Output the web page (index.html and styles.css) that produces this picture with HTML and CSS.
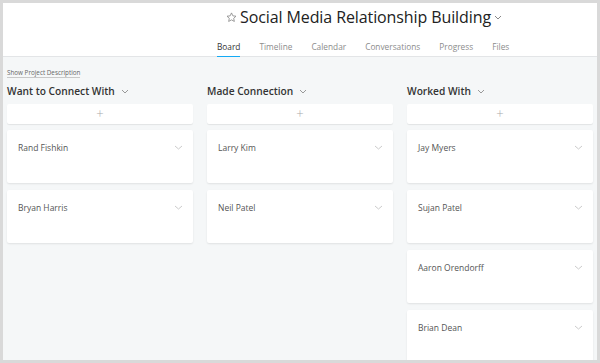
FILE: index.html
```html
<!DOCTYPE html>
<html>
<head>
  <title>Social Media Relationship Building</title>
  <link rel="stylesheet" href="styles.css">
</head>
<body>
  <div class="frame">
    <div class="header">
      <div class="title-row">
        <svg class="star" width="11" height="11" viewBox="0 0 12 12"><path d="M6 1l1.5 3.2 3.4.4-2.5 2.3.7 3.4L6 8.6 2.9 10.3l.7-3.4L1.1 4.6l3.4-.4z" fill="none" stroke="#888" stroke-width="0.9" stroke-linejoin="round"/></svg>
        <h1 class="title">Social Media Relationship Building</h1>
        <svg class="caret" width="8" height="5" viewBox="0 0 8 5"><path d="M1 1l3 3 3-3" fill="none" stroke="#888" stroke-width="1"/></svg>
      </div>
      <div class="tabs">
        <span class="tab active">Board</span>
        <span class="tab">Timeline</span>
        <span class="tab">Calendar</span>
        <span class="tab">Conversations</span>
        <span class="tab">Progress</span>
        <span class="tab">Files</span>
      </div>
    </div>

    <div class="board">
      <a class="desc-link">Show Project Description</a>
      <div class="columns">
        <div class="column">
          <div class="column-head">Want to Connect With <svg class="caret" width="8" height="5" viewBox="0 0 8 5"><path d="M1 1l3 3 3-3" fill="none" stroke="#999" stroke-width="1"/></svg></div>
          <div class="add-card">+</div>
          <div class="card"><span>Rand Fishkin</span><svg class="card-caret" width="9" height="5" viewBox="0 0 9 5"><path d="M1 1l3.5 3 3.5-3" fill="none" stroke="#ccc" stroke-width="1"/></svg></div>
          <div class="card"><span>Bryan Harris</span><svg class="card-caret" width="9" height="5" viewBox="0 0 9 5"><path d="M1 1l3.5 3 3.5-3" fill="none" stroke="#ccc" stroke-width="1"/></svg></div>
        </div>
        <div class="column">
          <div class="column-head">Made Connection <svg class="caret" width="8" height="5" viewBox="0 0 8 5"><path d="M1 1l3 3 3-3" fill="none" stroke="#999" stroke-width="1"/></svg></div>
          <div class="add-card">+</div>
          <div class="card"><span>Larry Kim</span><svg class="card-caret" width="9" height="5" viewBox="0 0 9 5"><path d="M1 1l3.5 3 3.5-3" fill="none" stroke="#ccc" stroke-width="1"/></svg></div>
          <div class="card"><span>Neil Patel</span><svg class="card-caret" width="9" height="5" viewBox="0 0 9 5"><path d="M1 1l3.5 3 3.5-3" fill="none" stroke="#ccc" stroke-width="1"/></svg></div>
        </div>
        <div class="column">
          <div class="column-head">Worked With <svg class="caret" width="8" height="5" viewBox="0 0 8 5"><path d="M1 1l3 3 3-3" fill="none" stroke="#999" stroke-width="1"/></svg></div>
          <div class="add-card">+</div>
          <div class="card"><span>Jay Myers</span><svg class="card-caret" width="9" height="5" viewBox="0 0 9 5"><path d="M1 1l3.5 3 3.5-3" fill="none" stroke="#ccc" stroke-width="1"/></svg></div>
          <div class="card"><span>Sujan Patel</span><svg class="card-caret" width="9" height="5" viewBox="0 0 9 5"><path d="M1 1l3.5 3 3.5-3" fill="none" stroke="#ccc" stroke-width="1"/></svg></div>
          <div class="card"><span>Aaron Orendorff</span><svg class="card-caret" width="9" height="5" viewBox="0 0 9 5"><path d="M1 1l3.5 3 3.5-3" fill="none" stroke="#ccc" stroke-width="1"/></svg></div>
          <div class="card"><span>Brian Dean</span><svg class="card-caret" width="9" height="5" viewBox="0 0 9 5"><path d="M1 1l3.5 3 3.5-3" fill="none" stroke="#ccc" stroke-width="1"/></svg></div>
        </div>
      </div>
    </div>
  </div>
</body>
</html>
```

FILE: styles.css
```css
html, body {
  margin: 0;
  height: 100%;
  overflow: hidden;
}
body {
  background: #d9d9d9;
  padding: 3px;
  box-sizing: border-box;
  font-family: "Open Sans", "Noto Sans", sans-serif;
}
.frame {
  height: 357px;
  width: 594px;
  background: #fff;
  overflow: hidden;
  display: flex;
  flex-direction: column;
}
.header {
  height: 54px;
  border-bottom: 1px solid #e3e5e7;
  box-sizing: border-box;
  flex: 0 0 auto;
}
.title-row {
  display: flex;
  align-items: center;
  padding-left: 223px;
  height: 28px;
}
.star {
  margin-right: 3px;
  margin-top: 1px;
}
.title {
  margin: 0;
  font-size: 16px;
  font-weight: 400;
  color: #222;
  letter-spacing: -0.1px;
}
.title-row .caret {
  margin-left: 3px;
  margin-top: 1px;
}
.tabs {
  display: flex;
  gap: 19px;
  padding-left: 214px;
  margin-top: 10px;
}
.tab {
  font-size: 8.3px;
  color: #8c8c8c;
  padding-bottom: 3px;
  height: 12px;
  line-height: 12px;
}
.tab.active {
  color: #333;
  border-bottom: 2px solid #14aaf5;
}
.board {
  flex: 1;
  background: #f5f7f8;
  padding: 11px 0 0 4px;
  overflow: hidden;
  display: flex;
  flex-direction: column;
  align-items: flex-start;
}
.desc-link {
  display: block;
  font-size: 6.3px;
  color: #666;
  border-bottom: 1px solid #c8c8c8;
  line-height: 9px;
}
.columns {
  display: flex;
  gap: 14px;
  margin-top: 6px;
}
.column {
  width: 186px;
  flex: 0 0 auto;
  display: flex;
  flex-direction: column;
  gap: 7px;
}
.column-head {
  font-size: 10.2px;
  font-weight: 600;
  color: #333;
  height: 14px;
  line-height: 14px;
  display: flex;
  align-items: center;
  margin-bottom: -1px;
}
.column-head .caret {
  margin-left: 6px;
}
.add-card {
  background: #fff;
  height: 20px;
  line-height: 19px;
  text-align: center;
  font-size: 13px;
  font-weight: 300;
  color: #aaa;
  border-radius: 2px;
  box-shadow: 0 1px 1px rgba(0, 0, 0, 0.08);
  margin-bottom: -1px;
}
.card {
  background: #fff;
  height: 53px;
  border-radius: 2px;
  box-shadow: 0 1px 2px rgba(0, 0, 0, 0.09);
  display: flex;
  justify-content: space-between;
  align-items: flex-start;
  padding: 12px 10px 0 11px;
  box-sizing: border-box;
  font-size: 8.5px;
  color: #555;
  flex: 0 0 auto;
}
.card-caret {
  margin-top: 3px;
}
```
